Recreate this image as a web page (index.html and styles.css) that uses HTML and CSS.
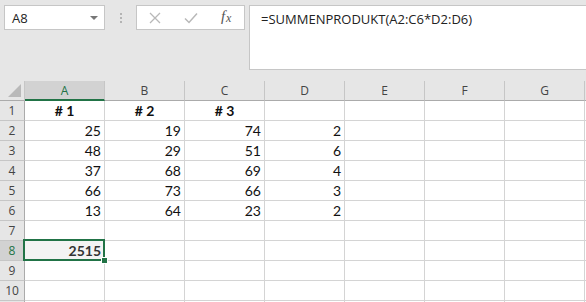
FILE: index.html
```html
<!DOCTYPE html>
<html lang="de">
<head>
    <meta charset="UTF-8">
    <title>SUMMENPRODUKT</title>
    <link rel="stylesheet" href="styles.css">
</head>
<body>
    <div class="toolbar">
        <div class="name-box">
            <span>A8</span>
            <span class="caret"></span>
        </div>
        <div class="grip"><i></i><i></i><i></i></div>
        <div class="buttons">
            <span class="btn">
                <svg width="12" height="12" viewBox="0 0 12 12"><path d="M1 1L11 11M11 1L1 11" stroke="#b8b8b8" stroke-width="1.3" fill="none"/></svg>
            </span>
            <span class="btn">
                <svg width="14" height="12" viewBox="0 0 14 12"><path d="M1 6.5L5 10.5L13 1.5" stroke="#b8b8b8" stroke-width="1.5" fill="none"/></svg>
            </span>
            <span class="btn fx"><i>f</i><i class="x">x</i></span>
        </div>
        <div class="formula">=SUMMENPRODUKT(A2:C6*D2:D6)</div>
    </div>

    <div class="sheet">
        <div class="corner"><span class="tri"></span></div>
        <div class="col-head active">A</div>
        <div class="col-head">B</div>
        <div class="col-head">C</div>
        <div class="col-head">D</div>
        <div class="col-head">E</div>
        <div class="col-head">F</div>
        <div class="col-head">G</div>
        <div class="col-head last"></div>

        <div class="row-head">1</div>
        <div class="cell head">#&nbsp;1</div><div class="cell head">#&nbsp;2</div><div class="cell head">#&nbsp;3</div>
        <div class="cell"></div><div class="cell"></div><div class="cell"></div><div class="cell"></div><div class="cell"></div>

        <div class="row-head">2</div>
        <div class="cell num">25</div><div class="cell num">19</div><div class="cell num">74</div><div class="cell num">2</div>
        <div class="cell"></div><div class="cell"></div><div class="cell"></div><div class="cell"></div>

        <div class="row-head">3</div>
        <div class="cell num">48</div><div class="cell num">29</div><div class="cell num">51</div><div class="cell num">6</div>
        <div class="cell"></div><div class="cell"></div><div class="cell"></div><div class="cell"></div>

        <div class="row-head">4</div>
        <div class="cell num">37</div><div class="cell num">68</div><div class="cell num">69</div><div class="cell num">4</div>
        <div class="cell"></div><div class="cell"></div><div class="cell"></div><div class="cell"></div>

        <div class="row-head">5</div>
        <div class="cell num">66</div><div class="cell num">73</div><div class="cell num">66</div><div class="cell num">3</div>
        <div class="cell"></div><div class="cell"></div><div class="cell"></div><div class="cell"></div>

        <div class="row-head">6</div>
        <div class="cell num">13</div><div class="cell num">64</div><div class="cell num">23</div><div class="cell num">2</div>
        <div class="cell"></div><div class="cell"></div><div class="cell"></div><div class="cell"></div>

        <div class="row-head">7</div>
        <div class="cell"></div><div class="cell"></div><div class="cell"></div><div class="cell"></div>
        <div class="cell"></div><div class="cell"></div><div class="cell"></div><div class="cell"></div>

        <div class="row-head active">8</div>
        <div class="cell num selected">2515<span class="frame"><span class="handle"></span></span></div>
        <div class="cell"></div><div class="cell"></div><div class="cell"></div>
        <div class="cell"></div><div class="cell"></div><div class="cell"></div><div class="cell"></div>

        <div class="row-head">9</div>
        <div class="cell"></div><div class="cell"></div><div class="cell"></div><div class="cell"></div>
        <div class="cell"></div><div class="cell"></div><div class="cell"></div><div class="cell"></div>

        <div class="row-head">10</div>
        <div class="cell"></div><div class="cell"></div><div class="cell"></div><div class="cell"></div>
        <div class="cell"></div><div class="cell"></div><div class="cell"></div><div class="cell"></div>

        <div class="row-head"></div>
        <div class="cell"></div><div class="cell"></div><div class="cell"></div><div class="cell"></div>
        <div class="cell"></div><div class="cell"></div><div class="cell"></div><div class="cell"></div>
    </div>
</body>
</html>
```

FILE: styles.css
```css
body {
    margin: 0;
    background: #e6e6e6;
    font-family: "Open Sans", "Noto Sans", sans-serif;
    overflow: hidden;
}

/* formula bar */
.toolbar {
    display: flex;
    align-items: flex-start;
    padding: 5px 0 0 4px;
    height: 71px;
    box-sizing: border-box;
}
.name-box {
    width: 101px;
    height: 25px;
    box-sizing: border-box;
    background: #fff;
    border: 1px solid #c6c6c6;
    display: flex;
    align-items: center;
    justify-content: space-between;
    padding: 0 6px 0 7px;
    font-size: 13px;
    color: #222;
}
.caret {
    width: 0;
    height: 0;
    border-left: 4px solid transparent;
    border-right: 4px solid transparent;
    border-top: 4px solid #777;
}
.grip {
    width: 31px;
    height: 25px;
    display: flex;
    flex-direction: column;
    align-items: center;
    justify-content: center;
    gap: 2px;
}
.grip i {
    width: 2px;
    height: 2px;
    background: #b4b4b4;
}
.buttons {
    width: 109px;
    height: 25px;
    box-sizing: border-box;
    background: #fff;
    border: 1px solid #c6c6c6;
    display: flex;
}
.btn {
    flex: 1;
    display: flex;
    align-items: center;
    justify-content: center;
}
.fx {
    font-family: "Liberation Serif", serif;
    font-size: 15px;
    color: #555;
    padding-bottom: 2px;
}
.fx .x {
    font-size: 12px;
    margin-left: 1px;
    margin-top: 3px;
}
.formula {
    flex: 1;
    margin-left: 4px;
    height: 65px;
    box-sizing: border-box;
    background: #fff;
    border: 1px solid #c6c6c6;
    border-right: none;
    padding: 4px 0 0 11px;
    font-size: 13px;
    color: #222;
}

/* sheet */
.sheet {
    margin-top: 10px;
    display: grid;
    grid-template-columns: 25px repeat(7, 80px) 1fr;
    grid-auto-rows: 20px;
    background: #fff;
}
.corner {
    background: #e6e6e6;
    border-right: 1px solid #c6c6c6;
    border-bottom: 1px solid #ababab;
    position: relative;
}
.tri {
    position: absolute;
    right: 3px;
    bottom: 3px;
    width: 0;
    height: 0;
    border-left: 13px solid transparent;
    border-bottom: 13px solid #b9b9b9;
}
.col-head {
    background: #e6e6e6;
    border-right: 1px solid #c6c6c6;
    border-bottom: 1px solid #ababab;
    font-size: 12px;
    color: #444;
    display: flex;
    align-items: center;
    justify-content: center;
}
.col-head.active {
    background: #d2d2d2;
    color: #217346;
    border-bottom: 2px solid #217346;
}
.col-head.last {
    border-right: none;
}
.row-head {
    background: #e6e6e6;
    border-right: 1px solid #ababab;
    border-bottom: 1px solid #c6c6c6;
    font-size: 12px;
    color: #444;
    display: flex;
    align-items: center;
    justify-content: center;
}
.row-head.active {
    background: #d2d2d2;
    color: #217346;
}
.cell {
    border-right: 1px solid #d4d4d4;
    border-bottom: 1px solid #d4d4d4;
    font-family: "Lato", sans-serif;
    font-size: 14px;
    color: #111;
    display: flex;
    align-items: center;
    padding: 0 3px;
    box-sizing: border-box;
}
.num {
    justify-content: flex-end;
}
.head {
    justify-content: center;
    font-weight: bold;
}
.selected {
    position: relative;
    background: #f3f3f3;
    font-weight: bold;
    color: #333;
}
.frame {
    position: absolute;
    left: -2px;
    top: -2px;
    right: -1px;
    bottom: -1px;
    border: 2px solid #217346;
}
.handle {
    position: absolute;
    right: -5px;
    bottom: -5px;
    width: 5px;
    height: 5px;
    background: #217346;
    border: 1px solid #fff;
}
```
